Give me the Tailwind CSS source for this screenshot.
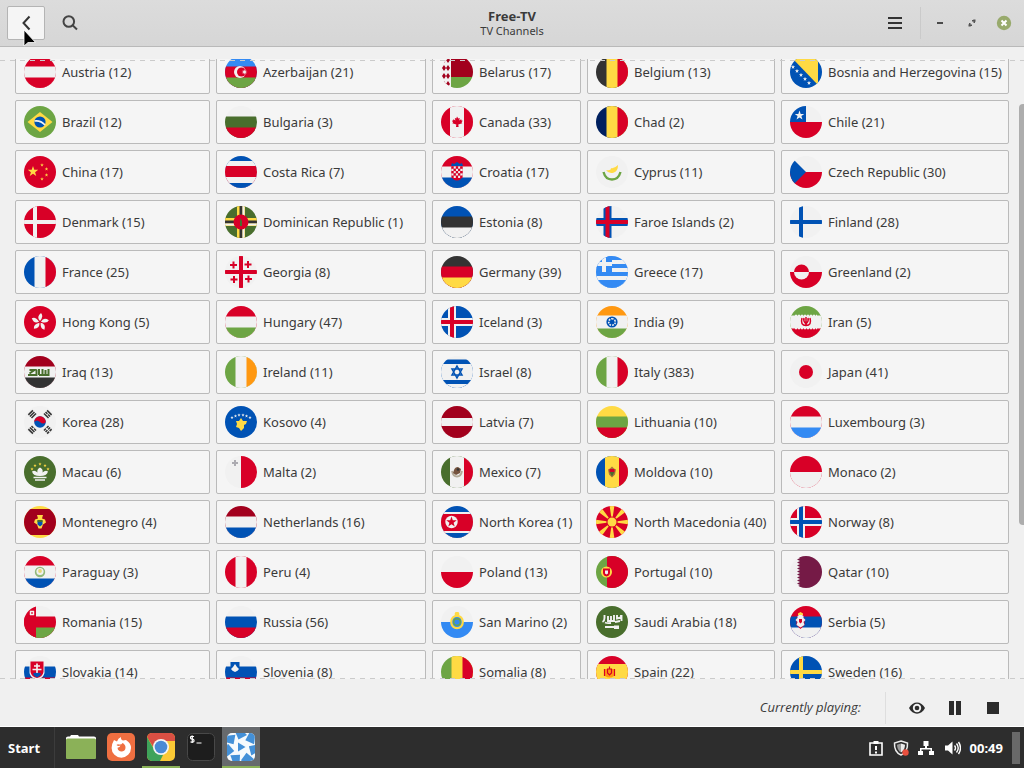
<!DOCTYPE html>
<html lang="en">
<head>
<meta charset="utf-8">
<title>Free-TV</title>
<script src="https://cdn.jsdelivr.net/npm/@tailwindcss/browser@4"></script>
</head>
<body class="flex h-screen flex-col overflow-hidden bg-[#f0f0f0] font-['Noto_Sans','Open_Sans',sans-serif] text-[13px] text-[#3a3a3a]">

<header class="relative grid h-[47px] shrink-0 grid-cols-[1fr_auto_1fr] items-center border-b border-[#b9b9b9] bg-linear-to-b from-[#dcdcdc] to-[#d6d6d6] px-[7px]">
  <div class="flex items-center gap-[5px]">
    <button aria-label="Back" class="flex h-[34px] w-[38px] items-center justify-center rounded-xs border border-[#b4b4b4] bg-[#f5f5f5]">
      <svg class="size-4" viewBox="0 0 16 16" fill="none" stroke="#333" stroke-width="2"><path d="M11.500 1.500L5.500 8l6 6.500"/></svg>
    </button>
    <button aria-label="Search" class="flex h-[34px] w-10 items-center justify-center">
      <svg class="size-4" viewBox="0 0 16 16" fill="none" stroke="#444" stroke-width="2"><circle cx="6.800" cy="6.500" r="5.300"/><path d="M10.600 10.300L15 14.500"/></svg>
    </button>
  </div>
  <div class="text-center">
    <h1 class="text-[13px] leading-[15px] font-bold">Free-TV</h1>
    <p class="text-[11px] leading-[13px]">TV Channels</p>
  </div>
  <div class="flex items-center justify-end pr-[5px]">
    <button aria-label="Menu" class="flex h-8 w-[50px] items-center justify-center">
      <svg class="size-4" viewBox="0 0 16 16" fill="#333"><path d="M1 2h14v2H1zM1 7h14v2H1zM1 12h14v2H1z"/></svg>
    </button>
    <div class="h-8 w-px bg-[#cacaca]"></div>
    <div class="flex gap-4 pl-[11px]">
      <button aria-label="Minimize" class="size-4"><svg viewBox="0 0 16 16" fill="#4a4a4a"><path d="M5 7h6v2H5z"/></svg></button>
      <button aria-label="Restore" class="size-4"><svg viewBox="0 0 16 16" fill="#555"><path d="M8 5h3v3h-1.500V6.500H8zM5 8h1.500v1.500H8V11H5z"/><path d="M9 4.500l2.500 0 0 2.500zM4.500 9v2.500H7z"/></svg></button>
      <button aria-label="Close" class="size-4"><svg viewBox="0 0 16 16"><circle cx="8" cy="8" r="7.200" fill="#98aa6c"/><path d="M5.500 5.500l5 5m0-5l-5 5" stroke="#fff" stroke-width="2"/></svg></button>
    </div>
  </div>
  <svg class="absolute top-[29px] left-[23px] z-10 h-[19px] w-[14px]" viewBox="0 0 14 19"><path d="M1 1v16l4-3.500h7.500z" fill="#000" stroke="#fff" stroke-width=".8"/></svg>
</header>

<main class="relative mt-3 min-h-0 flex-1 overflow-hidden">
  <div id="channels" class="-mt-[9px] grid auto-rows-[44px] grid-cols-[minmax(0,195fr)_minmax(0,210fr)_minmax(0,149fr)_minmax(0,188fr)_minmax(0,228fr)] gap-1.5 px-[15px]"></div>
  <div class="absolute inset-x-0 top-px h-px bg-[repeating-linear-gradient(to_right,#cbcbcb_0_5px,transparent_5px_10px)]"></div>
  <div class="absolute inset-x-0 bottom-0 h-px bg-[repeating-linear-gradient(to_right,#cbcbcb_0_5px,transparent_5px_10px)]"></div>
  <div class="absolute top-[45px] right-0 bottom-[154px] w-[5px] rounded-l-sm bg-[#adadad]"></div>
</main>

<footer class="flex h-12 shrink-0 items-center justify-end border-b border-white pt-[11px] pr-3">
  <p class="pr-6 font-['Open_Sans','Noto_Sans',sans-serif] italic">Currently playing:</p>
  <div class="mr-3 h-8 w-px bg-[#dedede]"></div>
  <button aria-label="Show" class="flex h-8 w-[38px] items-center justify-center"><svg class="size-4" viewBox="0 0 16 16"><path d="M0 8C3.500.5 12.500.5 16 8 12.500 15.500 3.500 15.500 0 8z" fill="#2c2c2c"/><circle cx="8" cy="8" r="4.200" fill="#f0f0f0"/><circle cx="8" cy="8" r="2.300" fill="#2c2c2c"/></svg></button>
  <button aria-label="Pause" class="flex h-8 w-[38px] items-center justify-center"><svg class="size-4" viewBox="0 0 16 16" fill="#2c2c2c"><path d="M2 1h5v14H2zM9 1h5v14H9z"/></svg></button>
  <button aria-label="Stop" class="flex h-8 w-[38px] items-center justify-center"><svg class="size-4" viewBox="0 0 16 16" fill="#2c2c2c"><path d="M2 2h12v12H2z"/></svg></button>
</footer>

<nav class="flex h-[41px] shrink-0 items-center justify-between bg-[#2d2d2d] pr-1 pl-2 text-white">
  <div class="flex h-full items-center">
    <button class="w-[46px] pt-0.5 text-left font-bold">Start</button>
    <div class="mr-[7px] h-full w-px bg-[#3c3c3c]"></div>
    <div class="flex h-full gap-0.5">
      <button aria-label="Files" class="flex h-full w-[38px] items-center justify-center"><svg class="size-8" viewBox="0 0 32 32"><path d="M1 6q0-1.500 2-1.500h2l1-1.500h7l1 1.500h15q2 0 2 1.500v4H1z" fill="#fff"/><path d="M1 8q0-1.500 1.500-1.500h27q1.500 0 1.500 1.500v18q0 1-1 1H2q-1 0-1-1z" fill="#8bb158"/></svg></button>
      <button aria-label="Firefox" class="flex h-full w-[38px] items-center justify-center"><svg class="size-8" viewBox="0 0 32 32"><rect x="2" y="1" width="28" height="28" rx="5" fill="#ef6f41"/><path d="M9 8l3 1.500q1-3.500 4-4.500-.5 2.500 2 3.500l3-.5q5 3 5 8a9.700 9.700 0 0 1-19.400 0q0-4 2.400-8z" fill="#fff"/><path d="M11.500 13q1.500 1.500 4 .5-.5 2-3 2.200.5 4 4.500 3.800 3.500-.5 3.500-4 0-3-3-4.500-1 2-3.500 1.500-1.500-.5-2.500.500z" fill="#ef6f41"/></svg></button>
      <button aria-label="Chrome" class="flex h-full w-[38px] items-center justify-center border-b-2 border-[#8bb158] pt-0.5"><svg class="size-8" viewBox="0 0 32 32"><defs><clipPath id="tile"><rect x="2" y="1" width="28" height="28" rx="5"/></clipPath></defs><g clip-path="url(#tile)"><path d="M2 1h28v28H2z" fill="#fbc935"/><path d="M2 1h28v8H16l-6 9L2 5z" fill="#d94f43"/><path d="M2 5l8 14 8 4-3 6H2z" fill="#3fa35a"/></g><circle cx="16" cy="15" r="8" fill="#f4f4f4"/><circle cx="16" cy="15" r="6.300" fill="#4a8ad4"/></svg></button>
      <button aria-label="Terminal" class="flex h-full w-[38px] items-center justify-center"><svg class="size-8" viewBox="0 0 32 32"><rect x="2.500" y="1.500" width="27" height="27" rx="5" fill="#1d1d1d" stroke="#484848"/><path d="M9 4.500q-3.500-.8-3.500 1t1.700 1.600 1.800 1.700-3.500 1M7.300 3.500v7.500M11.500 11h5" fill="none" stroke="#fff" stroke-width="1.200"/></svg></button>
      <button aria-label="Hypnotix" class="flex h-full w-[38px] items-center justify-center border-b-2 border-[#8bb158] bg-[#676a6d] pt-0.5"><svg class="size-8" viewBox="0 0 32 32"><rect x="2" y="1" width="28" height="28" rx="5" fill="#f6fafd"/><g clip-path="url(#tile)"><g id="blades" fill="#4390d8"></g></g><path d="M13 10.500l7.500 4.500-7.500 4.500z" fill="#4390d8"/></svg></button>
    </div>
  </div>
  <div class="flex h-full items-center gap-[9px]">
    <svg class="size-4" viewBox="0 0 16 16" fill="none" stroke="#fff" stroke-width="1.600"><path d="M2 3h12v12H2z"/><path d="M5.500 2.500h5" stroke-width="3"/><path d="M8 6v4M8 11.500v2" stroke-width="2"/></svg>
    <svg class="size-4" viewBox="0 0 16 16"><path d="M8 1l6.500 2Q15 12 8 15 1 12 1.500 3z" fill="#2d2d2d" stroke="#ececec" stroke-width="1.500"/><path d="M8 3.500l4 1.200Q12 10 8 12.500z" fill="#ececec"/><path d="M8 3.500L4 4.700Q4 10 8 12.500z" fill="#999"/><circle cx="12.500" cy="12.500" r="3.200" fill="#e9503f"/></svg>
    <svg class="size-4" viewBox="0 0 16 16" fill="#fff"><path d="M5.500 1h5v5H9v2h5v3h2v4h-5v-4h1.500V9.500h-9V11H5v4H0v-4h2V8h5V6H5.500z"/></svg>
    <svg class="ml-0.5 size-4" viewBox="0 0 16 16"><path d="M0 5.500h3L7.500 1.500v13L3 10.500H0z" fill="#fff"/><path d="M9.500 5.500q2 2.500 0 5M11.500 3.500q3.500 4.500 0 9M13.500 2q4 6 0 12" fill="none" stroke="#fff" stroke-width="1.400"/></svg>
    <time class="pt-0.5 font-bold">00:49</time>
    <div class="h-8 w-2 bg-[#696969]"></div>
  </div>
</nav>

<script>
const RED='#d80027',BLUE='#0052b4',GREEN='#6da544',YEL='#ffda44',WH='#f1f1f1',ORG='#ff9811',DG='#496e2d',SKY='#338af3',DR='#a2001d',BK='#333';
const rect=(x,y,w,h,c)=>`<rect x="${x}" y="${y}" width="${w}" height="${h}" fill="${c}"/>`;
const circ=(x,y,r,c)=>`<circle cx="${x}" cy="${y}" r="${r}" fill="${c}"/>`;
const path=(d,c)=>`<path d="${d}" fill="${c}"/>`;
const line=(d,c,w,dash='none')=>`<path d="${d}" fill="none" stroke="${c}" stroke-width="${w}" stroke-dasharray="${dash}"/>`;
// Horizontal and vertical bands: colours, with the positions at which they change
const H=(cs,at=[10.5,21.5])=>cs.map((c,i)=>rect(0,i?at[i-1]:0,32,32,c)).join('');
const V=(cs,at=[10.5,21.5])=>cs.map((c,i)=>rect(i?at[i-1]:0,0,32,32,c)).join('');
const star=(x,y,r,c,n=5)=>{let p=[];for(let i=0;i<n*2;i++){const a=Math.PI*i/n-Math.PI/2,q=i%2?r*.4:r;p.push((x+q*Math.cos(a)).toFixed(2)+','+(y+q*Math.sin(a)).toFixed(2));}return `<polygon points="${p.join(' ')}" fill="${c}"/>`;};
const cross=(bg,outer,inner,x=11,ow=5,iw=0)=>rect(0,0,32,32,bg)+rect(x-ow/2,0,ow,32,outer)+rect(0,16-ow/2,32,ow,outer)+(iw?rect(x-iw/2,0,iw,32,inner)+rect(0,16-iw/2,32,iw,inner):'');
const turn=(n,d)=>Array.from({length:n},(_,i)=>`<g transform="rotate(${i*360/n} 16 16)">${d}</g>`).join('');
// Three bars of a trigram; "gap" splits the middle or the outer ones
const trigram=(a,gap)=>`<g transform="rotate(${a} 16 16)">${[2,4.2,6.400].map(x=>rect(x,12.800,1.500,6.400,BK)).join('')}${rect(gap[0],15.500,gap[1],1,WH)}</g>`;
let checks='';for(let r=0;r<5;r++)for(let c=0;c<5;c++)checks+=rect(10.5+c*2.2,10.5+r*2.3,2.2,2.3,(r+c)%2?WH:RED);

const list=[
['Austria (12)',H([RED,WH,RED])],
['Azerbaijan (21)',H([SKY,RED,GREEN])+circ(15,16,6,WH)+circ(16.500,16,4.500,RED)+star(19.500,16,3,WH,8)],
['Belarus (17)',rect(0,0,32,32,WH)+rect(10,0,22,22,DR)+rect(10,21,22,11,GREEN)+[4,12,20,28].map(y=>path(`M1 ${y}l2-3 2 3-2 3zM5 ${y}l2-3 2 3-2 3z`,DR)).join('')],
['Belgium (13)',V([BK,YEL,RED])],
['Bosnia and Herzegovina (15)',rect(0,0,32,32,BLUE)+path('M3 3h25v26z',YEL)+[[3,11],[7,15],[11,19],[15,23],[19,27]].map(p=>star(p[0],p[1],2.2,WH)).join('')],
['Brazil (12)',rect(0,0,32,32,GREEN)+path('M16 6l12.500 10L16 26 3.500 16z',YEL)+circ(16,16,5.6,BLUE)+line('M10.500 15q6-1 10.500 4',WH,1.6)],
['Bulgaria (3)',H([WH,DG,RED])],
['Canada (33)',V([RED,WH,RED],[9,23])+path('M16 10.500l1.300 2 1.500-.5-.6 2.500 2-1.300.3 1.200 1.300.3-1.300 1.500.8 1-4 1.300.3 2.500h-2.600l.3-2.500-4-1.300.8-1-1.300-1.500 1.300-.3.3-1.200 2 1.300-.6-2.500 1.500.5z',RED)],
['Chad (2)',V(['#00205f',YEL,RED])],
['Chile (21)',H([WH,RED],[16])+rect(0,0,16,16,BLUE)+star(9.500,9.500,5,WH)],
['China (17)',rect(0,0,32,32,RED)+star(9,15.500,5.500,YEL)+[[18,9],[22.500,13],[22.500,19],[18,23]].map(p=>star(p[0],p[1],1.900,YEL)).join('')],
['Costa Rica (7)',H([BLUE,WH,RED,WH,BLUE],[5,10,21,27])],
['Croatia (17)',H([RED,WH,BLUE])+path('M10.500 10.500h11v9q-1 5-5.500 5t-5.500-5z',RED)+`<g>${checks}</g>`+path('M10 10l1-3 2 1 3-2 3 2 2-1 1 3z',BLUE)],
['Cyprus (11)',rect(0,0,32,32,WH)+path('M10 14q5 1 5-2 3 1 7-3 0 6-4 7.500-5 2-8-2.500z',YEL)+line('M7.500 16q2 7.500 8.500 7.500t8.500-7.500',GREEN,2.4)],
['Czech Republic (30)',H([WH,RED],[16])+path('M4 4l12 12L4 28H0V0z',BLUE)],
['Denmark (15)',cross(RED,WH,'',11,4)],
['Dominican Republic (1)',rect(0,0,32,32,DG)+rect(12,0,8,32,YEL)+rect(0,12,32,8,YEL)+rect(14.500,0,3,32,BK)+rect(0,14.500,32,3,BK)+rect(17.500,0,2,32,WH)+rect(0,17.500,32,2,WH)+circ(16,16,7.5,RED)+path('M15 12l2 3v5h-2z',DG)],
['Estonia (8)',H([BLUE,BK,WH])],
['Faroe Islands (2)',cross(WH,BLUE,RED,11.500,8,4)],
['Finland (28)',cross(WH,BLUE,'',11,4)],
['France (25)',V([BLUE,WH,RED])],
['Georgia (8)',rect(0,0,32,32,WH)+rect(14,0,4,32,RED)+rect(0,14,32,4,RED)+turn(4,rect(7.500,5.500,2,7,RED)+rect(5,8,7,2,RED))],
['Germany (39)',H([BK,RED,YEL])],
['Greece (17)',H([SKY,WH,SKY,WH,SKY,WH,SKY],[4,8,12,16,20,24])+rect(0,0,16,16,SKY)+rect(6,0,4,16,WH)+rect(0,6,16,4,WH)],
['Greenland (2)',H([WH,RED],[16])+circ(11.500,16,7.5,RED)+path('M4 16a7.500 7.500 0 0 0 15 0z',WH)],
['Hong Kong (5)',rect(0,0,32,32,RED)+turn(5,path('M16 15q-4-4 1-8 3 3-1 8z',WH))],
['Hungary (47)',H([RED,WH,GREEN])],
['Iceland (3)',cross(BLUE,WH,RED,11,8,4)],
['India (9)',H([ORG,WH,GREEN],[9.500,22.500])+circ(16,16,5.6,BLUE)+line('M16 12.700a3.300 3.300 0 1 1-.010 0',WH,1.6,'1.7 1')+circ(16,16,1.2,BLUE)],
['Iran (5)',H([GREEN,WH,RED],[9.500,22.500])+line('M5 9.500h22M5 22.500h22',WH,1.4,'2 1')+line('M12 12q-2 7.500 4 7.500t4-7.500M16 11v9M14 12q-1 3 2 6 3-3 2-6',RED,1.5)],
['Iraq (13)',H([DR,WH,BK])+line('M4 19h8.500v-5M5.500 14h5l-5 3.500M15 19h9.500v-6M15 13v6M18.500 13v5M21.500 14v5',DG,2)],
['Ireland (11)',V([GREEN,WH,ORG])],
['Israel (8)',H([WH,BLUE,WH,BLUE,WH],[3.500,8,24,28])+line('M16 10l5 9H11zM16 22l5-9H11z',BLUE,1.500)],
['Italy (383)',V([GREEN,WH,RED])],
['Japan (41)',rect(0,0,32,32,WH)+circ(16,16,7,RED)],
['Korea (28)',rect(0,0,32,32,WH)+trigram(45,[3.500,0])+trigram(135,[4.2,1.500])+trigram(225,[2,6])+trigram(315,[6.400,1.500])+circ(16,16,5.8,BLUE)+path('M10.200 16a5.800 5.800 0 0 1 11.600 0q-2.500 3-5.800 0t-5.800 0z',RED)],
['Kosovo (4)',rect(0,0,32,32,BLUE)+path('M16 12l2 3h4l-1 3-2 1v3l-3 3-2-3-3-1 1-3-1-3h3z',YEL)+[[7,11.500],[10.500,10],[14,9],[18,9],[21.500,10],[25,11.500]].map(p=>star(p[0],p[1],1.700,WH)).join('')],
['Latvia (7)',H([DR,WH,DR],[12,20])],
['Lithuania (10)',H([YEL,GREEN,RED])],
['Luxembourg (3)',H([RED,WH,SKY])],
['Macau (6)',rect(0,0,32,32,DG)+path('M16 11.500q3.500 2 2.500 5 3-3 5.500-1-1 4.500-8 4.500t-8-4.500q2.500-2 5.500 1-1-3 2.500-5z',WH)+line('M9.500 21.500h13M11 24h10',WH,1.5)+[[8,13],[11,9.500],[16,8],[21,9.500],[24,13]].map(p=>star(p[0],p[1],1.700,YEL)).join('')],
['Malta (2)',V([WH,RED],[16])+rect(9,4,2,6,'#acabb1')+rect(7,6,6,2,'#acabb1')],
['Mexico (7)',V([DG,WH,RED],[9,23])+line('M11 15q1 5.500 5 5.500t5-5.500','#b3aa98',1.800)+path('M13 14q1-3 4-3l3 2-1 4-4 2-3-2z','#76543f')+circ(17,13.5,1.3,BK)],
['Moldova (10)',V([BLUE,YEL,RED],[9,23])+path('M16 10.500l2 2 2 1-1 5-3 3-3-3-1-5 2-1z','#a8743c')+path('M13.500 13h5v3h-5z',RED)+path('M13.500 16h5l-2.500 4.500z',DG)],
['Monaco (2)',H([RED,WH],[16])],
['Montenegro (4)',rect(0,0,32,32,YEL)+`<rect x="-1" y="3" width="34" height="26" rx="4" fill="${DR}"/>`+path('M13 9h6l-1 3.500 3 1 1 3-3 2-1.500 4h-3L13 18.500l-3-2 1-3 3-1z',YEL)+path('M13.500 14.500h5v4l-2.500 2-2.500-2z',BLUE)+rect(13.5,14,5,2,DG)],
['Netherlands (16)',H([DR,WH,BLUE])],
['North Korea (1)',H([BLUE,WH,RED,WH,BLUE],[6,8,25,27])+circ(10.500,16,6.2,WH)+star(10.500,16,5.500,RED)],
['North Macedonia (40)',rect(0,0,32,32,RED)+turn(8,path('M16 16L13.500-1h5z',YEL))+circ(16,16,5.6,RED)+circ(16,16,4.5,YEL)],
['Norway (8)',cross(RED,WH,BLUE,11,8,4)],
['Paraguay (3)',H([RED,WH,BLUE],[9.500,22.500])+circ(16,16,5.2,'#93b97a')+circ(16,15.5,3.6,WH)+circ(16,15,1.9,'#e6d875')],
['Peru (4)',V([RED,WH,RED])],
['Poland (13)',H([WH,RED],[16])],
['Portugal (10)',V([GREEN,RED],[11])+circ(10.500,16,5.5,YEL)+path('M7 12.500h7V17q-.5 3-3.500 3.500Q7.500 20 7 17z',RED)+path('M9 14.500h3v3l-1.500 1L9 17.500z',WH)],
['Qatar (10)',rect(0,0,32,32,WH)+path('M10 0h22v32H10'+[...Array(11)].map((_,i)=>`L7 ${30.500-i*3}L10 ${29-i*3}`).join('')+'z','#751a46')],
['Romania (15)',H([WH,RED,GREEN])+rect(0,0,12,32,RED)+line('M6 5.500h4M6 8.500h4M6.500 5v4M9.500 5v4',WH,1.4)],
['Russia (56)',H([WH,BLUE,RED])],
['San Marino (2)',H([WH,SKY],[16])+`<ellipse cx="16" cy="16" rx="5.800" ry="6.200" fill="${SKY}" stroke="${YEL}" stroke-width="2.200"/>`+path('M13.500 8l1-2h3l1 2-1 2h-3z',YEL)+circ(16,16,4,GREEN)+circ(16,16,2.6,SKY)],
['Saudi Arabia (18)',rect(0,0,32,32,DG)+line('M8.500 9v3q0 3-2 4M12 10v5h6V9M15 10v5M21 9v3.500l4-1V9M25.500 9v6M19 16l5-1M9 16.500q2 1 6 .5',WH,1.900)+rect(9,20,12,2,WH)+path('M18 19.500h5v3.500h-5z',WH)],
['Serbia (5)',H([RED,BLUE,WH])+path('M6.500 12h8v7l-4 4-4-4z',RED)+path('M10.500 8l3 2v2l2 2-2 2 1 3-4 2.500-4-2.500 1-3-2-2 2-2v-2z',WH)+path('M9 13h3v3l-1.500 1.500L9 16z',RED)+path('M8 7.500l2.500-1.500L13 7.500V9H8z',YEL)],
['Slovakia (14)',H([WH,BLUE,RED])+path('M5.500 5h15v12q-1 5-7.500 7-6.500-2-7.500-7z',WH)+path('M6.500 5.500h13V16q-1 5-6.500 6-5.500-1-6.500-6z',RED)+line('M13 7.500v10M10 10h6M8.500 13.500h9',WH,1.700)+path('M9 18q1-2 4-1 3-1 4 1-1 2.500-4 3.500-3-1-4-3.500z',BLUE)],
['Slovenia (8)',H([WH,BLUE,RED])+path('M5.500 6h9v5q0 4-4.500 5.500Q5.500 15 5.500 11z',BLUE)+path('M6 13l2-2 2-3 2 3 2 2q-1 2-4 3-3-1-4-3z',WH)],
['Somalia (8)',V([GREEN,YEL,RED])],
['Spain (22)',H([RED,YEL,RED],[8,24])+path('M9 13h9v7q-4.500 3-9 0z',ORG)+line('M8.500 13v7M18.500 13v7M11.500 13h4v4l-2 2-2-2zM13.500 10.500v3',RED,1.200)],
['Sweden (16)',cross(BLUE,YEL,'',11,4)]
];

document.getElementById('channels').innerHTML=list.map(([name,flag])=>`
<button class="flex items-center gap-1.5 overflow-hidden rounded-xs border border-[#bababa] bg-[#f5f5f5] pl-2 whitespace-nowrap"><svg class="size-8 shrink-0 rounded-full" viewBox="0 0 32 32" aria-hidden="true">${flag}</svg><span class="pt-0.5">${name}</span></button>`).join('');

document.getElementById('blades').innerHTML=Array.from({length:7},(_,i)=>`<path transform="rotate(${i*360/7} 16 15)" d="M9-3h7l6 6-8.500 4.500z"/>`).join('');
</script>
</body>
</html>
